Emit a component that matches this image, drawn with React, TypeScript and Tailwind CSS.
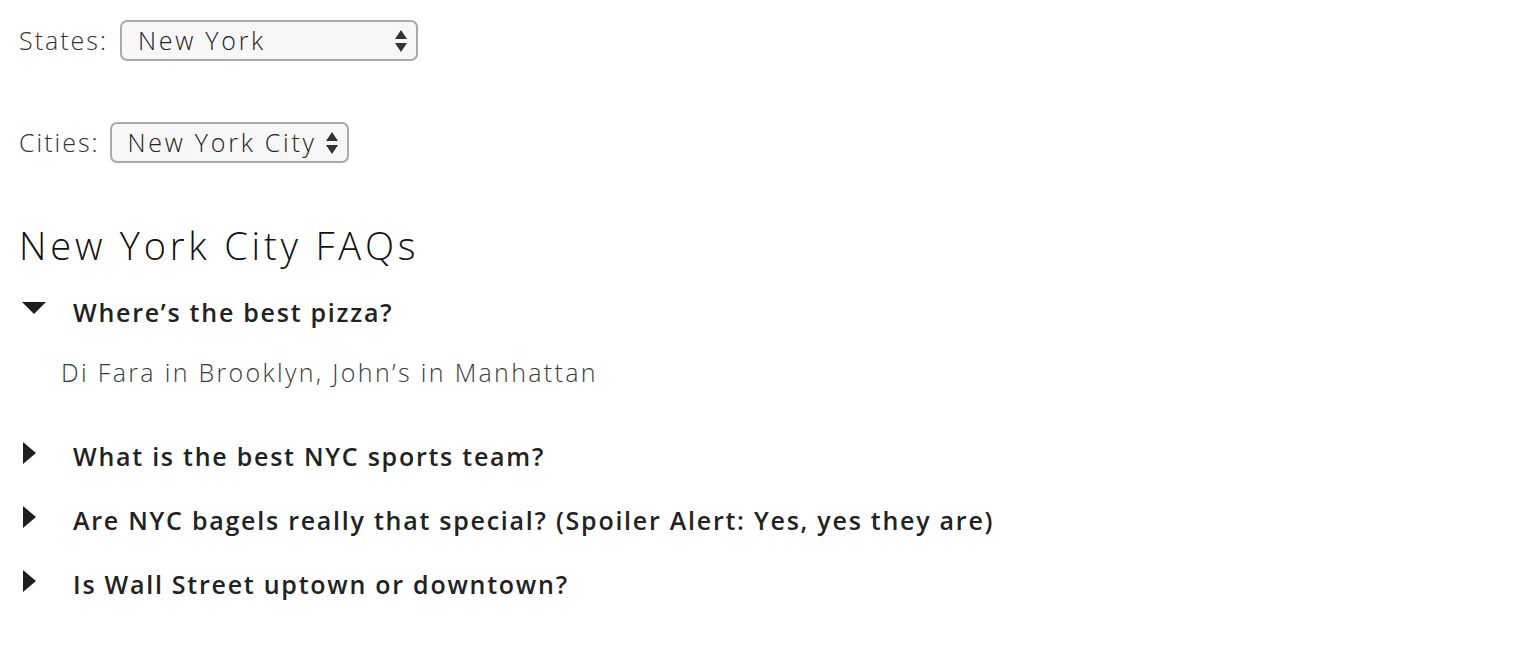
import React from "react";

function Arrows() {
  return (
    <svg width="14" height="24" viewBox="0 0 14 24" className="shrink-0">
      <polygon points="7,1 13,10 1,10" fill="#333" />
      <polygon points="1,14 13,14 7,23" fill="#333" />
    </svg>
  );
}

function Select({ value, width }: { value: string; width: string }) {
  return (
    <div
      className={`flex h-[41px] items-center justify-between rounded-[7px] border-2 border-[#a9a9a9] bg-[#f7f7f7] pl-[16px] pr-[8px] text-[25px] font-light tracking-[0.11em] text-[#222] ${width}`}
    >
      <span className="leading-none">{value}</span>
      <Arrows />
    </div>
  );
}

function Down() {
  return (
    <svg width="24" height="13" viewBox="0 0 24 13">
      <polygon points="0,0 24,0 12,12" fill="#1f1f1f" />
    </svg>
  );
}

function Right() {
  return (
    <svg width="13" height="22" viewBox="0 0 13 22">
      <polygon points="0,0 13,11 0,22" fill="#1f1f1f" />
    </svg>
  );
}

const questions = [
  "What is the best NYC sports team?",
  "Are NYC bagels really that special? (Spoiler Alert: Yes, yes they are)",
  "Is Wall Street uptown or downtown?",
];

export default function App() {
  return (
    <div className="min-h-[662px] bg-white pl-[19px] pt-[20px] font-['Open_Sans',sans-serif] text-[#222]">
      <div className="flex items-center gap-[12px]">
        <span className="text-[25px] font-light tracking-[0.08em] text-[#333]">States:</span>
        <Select value="New York" width="w-[298px]" />
      </div>
      <div className="mt-[61px] flex items-center gap-[10px]">
        <span className="text-[25px] font-light tracking-[0.08em] text-[#333]">Cities:</span>
        <Select value="New York City" width="w-[239px]" />
      </div>
      <h1 className="mt-[58px] text-[38px] font-light leading-[48px] tracking-[0.1em] text-[#111]">
        New York City FAQs
      </h1>
      <div className="mt-[27px]">
        <div className="flex h-[34px] items-center">
          <div className="flex w-[54px] items-center pb-[9px] pl-[3px]">
            <Down />
          </div>
          <span className="text-[25px] font-semibold tracking-[0.07em] text-[#222]">
            Where’s the best pizza?
          </span>
        </div>
        <div className="mt-[24px] pl-[42px] text-[25px] font-light tracking-[0.093em] text-[#3a3a3a]">
          Di Fara in Brooklyn, John’s in Manhattan
        </div>
        <div className="mt-[48px] flex flex-col gap-[30px]">
          {questions.map((q) => (
            <div key={q} className="flex h-[34px] items-center">
              <div className="flex w-[54px] items-center pb-[8px] pl-[4px]">
                <Right />
              </div>
              <span className="text-[25px] font-semibold tracking-[0.07em] text-[#222]">{q}</span>
            </div>
          ))}
        </div>
      </div>
    </div>
  );
}
